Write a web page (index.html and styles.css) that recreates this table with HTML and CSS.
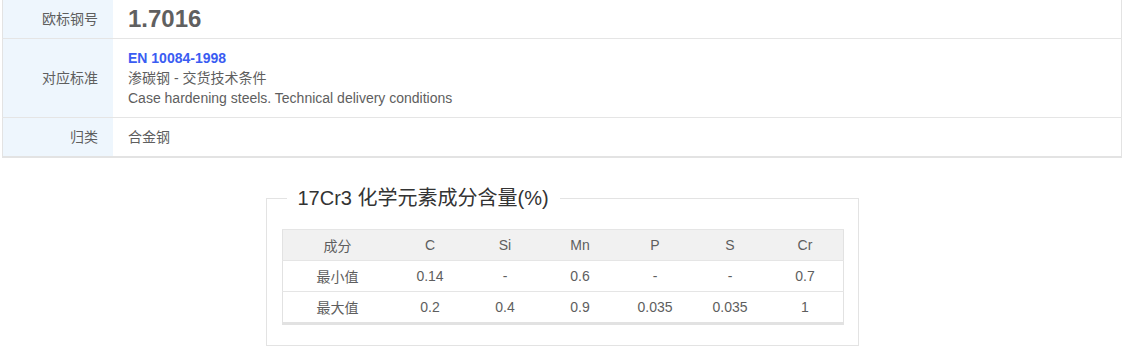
FILE: index.html
```html
<!DOCTYPE html>
<html lang="zh-CN">
<head>
<meta charset="utf-8">
<link rel="stylesheet" href="styles.css">
</head>
<body>
<div class="page">
  <table class="info">
    <tr>
      <th>欧标钢号</th>
      <td class="grade">1.7016</td>
    </tr>
    <tr>
      <th>对应标准</th>
      <td class="std">
        <div class="std-code">EN 10084-1998</div>
        <div>渗碳钢 - 交货技术条件</div>
        <div>Case hardening steels. Technical delivery conditions</div>
      </td>
    </tr>
    <tr>
      <th>归类</th>
      <td>合金钢</td>
    </tr>
  </table>

  <fieldset class="chem">
    <legend>17Cr3 化学元素成分含量(%)</legend>
    <table class="comp">
      <thead>
        <tr><th class="first">成分</th><th>C</th><th>Si</th><th>Mn</th><th>P</th><th>S</th><th>Cr</th></tr>
      </thead>
      <tbody>
        <tr><td>最小值</td><td>0.14</td><td>-</td><td>0.6</td><td>-</td><td>-</td><td>0.7</td></tr>
        <tr><td>最大值</td><td>0.2</td><td>0.4</td><td>0.9</td><td>0.035</td><td>0.035</td><td>1</td></tr>
      </tbody>
    </table>
  </fieldset>
</div>
</body>
</html>
```

FILE: styles.css
```css
html, body {
  margin: 0;
  padding: 0;
  background: #fff;
}

body {
  font-family: "Liberation Sans", Arial, "Noto Sans CJK SC", sans-serif;
  font-size: 14px;
  color: #5e5e5e;
}

.page {
  padding: 0 3px 0 2px;
}

.info {
  width: 100%;
  border-collapse: collapse;
  border-left: 1px solid #e3e3e3;
  border-right: 1px solid #e3e3e3;
  border-bottom: 2px solid #e3e3e3;
}

.info tr + tr th,
.info tr + tr td {
  border-top: 1px solid #e5e5e5;
}

.info th {
  width: 95px;
  padding: 0 15px 0 0;
  background: #eef6fd;
  text-align: right;
  font-weight: normal;
  font-size: 14px;
  color: #5e5e5e;
  vertical-align: middle;
  line-height: 20px;
}

.info td {
  padding: 9px 15px;
  line-height: 20px;
  vertical-align: middle;
}

.info tr:first-child td,
.info tr:first-child th {
  height: 38px;
  padding-top: 0;
  padding-bottom: 0;
}

.info td.grade {
  font-size: 24px;
  font-weight: bold;
  color: #606060;
  line-height: 38px;
}

.std-code {
  color: #3a5cf2;
  font-weight: bold;
  font-size: 14px;
}

.chem {
  width: 560px;
  margin: 27px auto 0;
  padding: 0 14px 20px 15px;
  border: 1px solid #e3e3e3;
  box-sizing: content-box;
}

.chem legend {
  margin-left: 5px;
  padding: 0 11px;
  font-size: 20px;
  color: #333;
  line-height: 26px;
}

.comp {
  width: 560px;
  margin-top: 18px;
  border-collapse: collapse;
  border: 1px solid #e2e2e2;
  border-bottom: 3px solid #e2e2e2;
  table-layout: fixed;
}

.comp th,
.comp td {
  width: 75px;
  height: 30px;
  padding: 0;
  text-align: center;
  font-weight: normal;
  color: #5e5e5e;
  border-top: 1px solid #e5e5e5;
}

.comp th.first {
  width: 110px;
}

.comp thead th {
  background: #f1f1f1;
}
```
